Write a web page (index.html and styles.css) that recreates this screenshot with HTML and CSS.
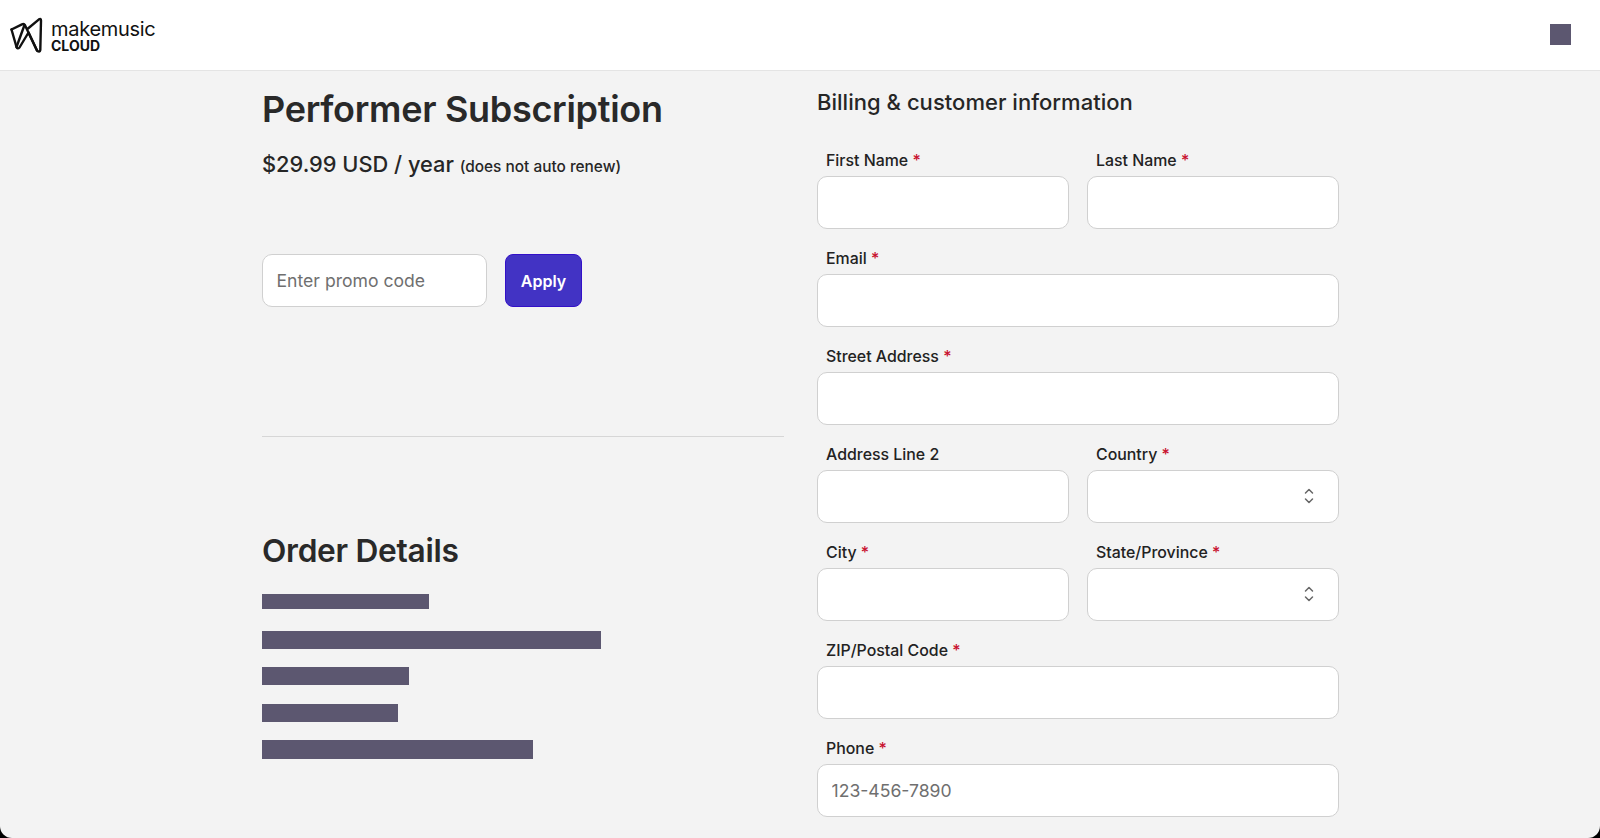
FILE: index.html
```html
<!DOCTYPE html>
<html lang="en">
<head>
<meta charset="utf-8">
<title>Checkout</title>
<link rel="stylesheet" href="styles.css">
</head>
<body>
<div class="app">
  <header class="topbar">
    <div class="brand">
      <svg class="brand-mark" viewBox="0 0 33 36" width="33" height="36" fill="none" stroke="#111" stroke-width="2.400" stroke-linejoin="round" stroke-linecap="round">
        <path d="M1.500 12.500 L6.500 30 Q7.500 32.500 9.500 30.500 L18.500 15.500 L27 33.500 Q29.800 36 30.300 33 L31 3.500 Q31 1 29 2.300 L18 11.500"/>
        <path d="M1.500 12.500 L12 7.300 Q14 6.400 15 8.300 L27 33.500"/>
        <path d="M6.500 30 L14.500 8"/>
      </svg>
      <div class="brand-text">
        <span class="brand-name">makemusic</span>
        <span class="brand-sub">CLOUD</span>
      </div>
    </div>
    <div class="avatar"></div>
  </header>
  <main class="content">
    <section class="summary">
      <h1 class="title">Performer Subscription</h1>
      <p class="price">$29.99 USD / year <small class="price-note">(does not auto renew)</small></p>
      <div class="promo">
        <input class="field promo-input" placeholder="Enter promo code">
        <button class="apply" type="button">Apply</button>
      </div>
      <hr class="divider">
      <h2 class="title order-title">Order Details</h2>
      <div class="redactions">
        <div class="bar bar-1"></div>
        <div class="bar bar-2"></div>
        <div class="bar bar-3"></div>
        <div class="bar bar-4"></div>
        <div class="bar bar-5"></div>
      </div>
    </section>
    <section class="billing">
      <h2 class="billing-title">Billing &amp; customer information</h2>
      <form class="form-grid">
        <div class="group"><label class="label">First Name <b class="req">*</b></label><input class="field"></div>
        <div class="group"><label class="label">Last Name <b class="req">*</b></label><input class="field"></div>
        <div class="group wide"><label class="label">Email <b class="req">*</b></label><input class="field"></div>
        <div class="group wide"><label class="label">Street Address <b class="req">*</b></label><input class="field"></div>
        <div class="group"><label class="label">Address Line 2</label><input class="field"></div>
        <div class="group"><label class="label">Country <b class="req">*</b></label>
          <div class="field select"><svg class="chevrons" viewBox="0 0 10 16" width="10" height="16" fill="none" stroke="#666" stroke-width="1.500" stroke-linecap="round" stroke-linejoin="round"><path d="M1.500 5 L5 1.500 L8.500 5 M1.500 11 L5 14.500 L8.500 11"/></svg></div></div>
        <div class="group"><label class="label">City <b class="req">*</b></label><input class="field"></div>
        <div class="group"><label class="label">State/Province <b class="req">*</b></label>
          <div class="field select"><svg class="chevrons" viewBox="0 0 10 16" width="10" height="16" fill="none" stroke="#666" stroke-width="1.500" stroke-linecap="round" stroke-linejoin="round"><path d="M1.500 5 L5 1.500 L8.500 5 M1.500 11 L5 14.500 L8.500 11"/></svg></div></div>
        <div class="group wide"><label class="label">ZIP/Postal Code <b class="req">*</b></label><input class="field"></div>
        <div class="group wide"><label class="label">Phone <b class="req">*</b></label><input class="field" placeholder="123-456-7890"></div>
      </form>
    </section>
  </main>
</div>
</body>
</html>
```
FILE: styles.css
```css
* { box-sizing: border-box; }
html, body { margin: 0; height: 100%; overflow: hidden; background: #000; }
body { font-family: Inter, "Liberation Sans", sans-serif; color: #262626; }
.app { height: 838px; background: #f3f3f3; border-radius: 0 0 12px 12px; overflow: hidden; }
.topbar { height: 71px; background: #fff; border-bottom: 1px solid #e4e4e4; display: flex; align-items: center; justify-content: space-between; padding: 0 29px 1px 10px; }
.brand { display: flex; align-items: center; gap: 8px; }
.brand-mark { display: block; }
.brand-text { display: flex; flex-direction: column; color: #111; padding-top: 4px; }
.brand-name { font-family: Inter, sans-serif; font-size: 20px; line-height: 18px; letter-spacing: -0.300px; }
.brand-sub { font-family: Inter, sans-serif; font-size: 14px; font-weight: 700; line-height: 15px; }
.avatar { width: 21px; height: 21px; background: #5c5770; }
.content { display: grid; grid-template-columns: 522px 522px; column-gap: 33px; padding-left: 262px; }
.title { margin: 0; font-size: 36px; line-height: 44px; font-weight: 600; color: #292929; letter-spacing: -0.300px; }
.summary { padding-top: 16px; }
.price { margin: 18px 0 0; font-size: 21.800px; line-height: 30px; font-weight: 500; }
.price-note { font-size: 15.400px; }
.promo { display: flex; gap: 18px; margin-top: 72px; }
.field { display: block; width: 100%; height: 53px; background: #fff; border: 1.500px solid #d0d0d0; border-radius: 10px; padding: 0 13.500px; font: 400 17.600px Inter, sans-serif; outline: 0; }
.field::placeholder { color: #6f6f6f; opacity: 1; }
.promo-input { width: 225px; }
.apply { width: 77px; height: 53px; border: 1px solid #3310c8; border-radius: 8px; background: #4233c4; color: #fff; font: 600 16px Inter, sans-serif; }
.divider { margin: 129px 0 0; border: 0; border-top: 1px solid #d6d6d6; }
.order-title { margin-top: 92px; font-size: 31.700px; }
.redactions { display: flex; flex-direction: column; margin-top: 20.500px; }
.bar { background: #5c5770; }
.bar-1 { width: 167px; height: 15px; }
.bar-2 { width: 339px; height: 18px; margin-top: 22px; }
.bar-3 { width: 147px; height: 18px; margin-top: 18px; }
.bar-4 { width: 136px; height: 18px; margin-top: 19px; }
.bar-5 { width: 271px; height: 19px; margin-top: 18px; }
.billing { padding-top: 18px; }
.billing-title { margin: 0; font-size: 22px; line-height: 26px; font-weight: 500; color: #262626; letter-spacing: 0.030px; }
.form-grid { display: grid; grid-template-columns: 252px 252px; column-gap: 18px; row-gap: 20px; margin-top: 35.500px; }
.group { display: flex; flex-direction: column; gap: 5px; }
.wide { grid-column: 1 / -1; }
.label { padding-left: 9px; font-size: 15.900px; line-height: 20px; font-weight: 500; color: #222; }
.req { color: #c8102e; font-weight: 500; }
.select { display: flex; align-items: center; justify-content: flex-end; padding-right: 24px; }
```
